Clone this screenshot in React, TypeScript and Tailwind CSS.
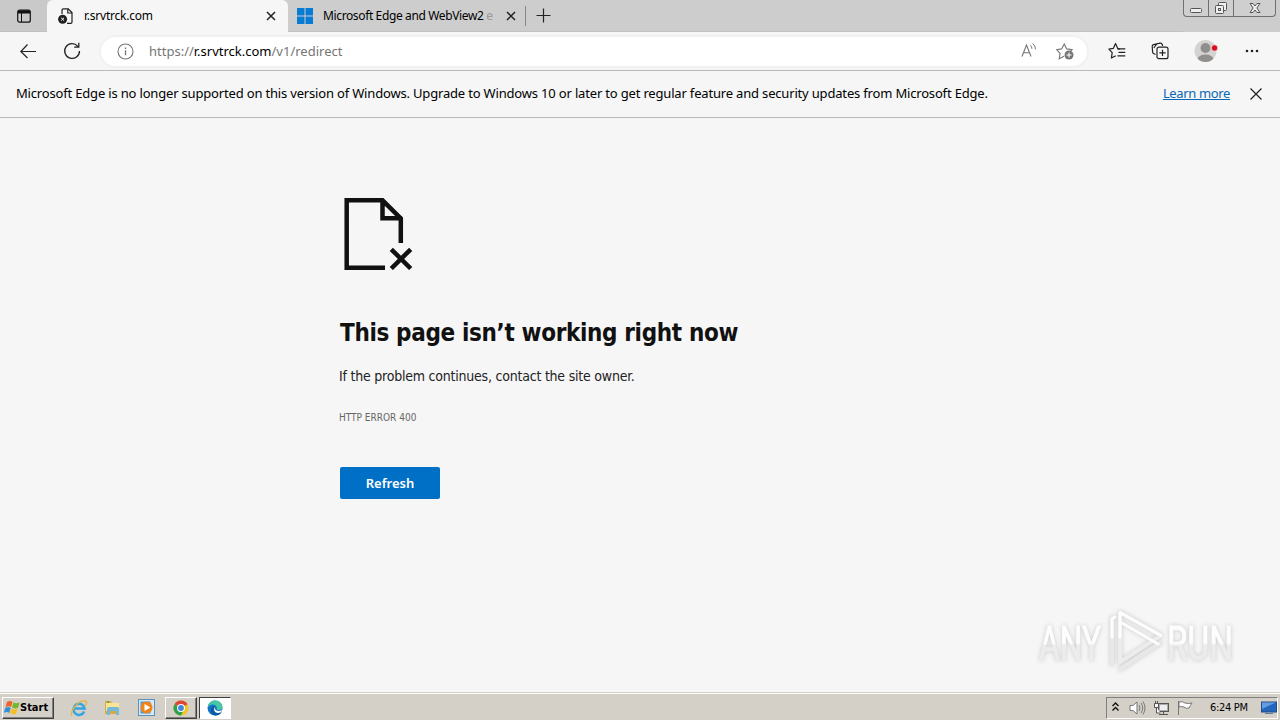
import type { ReactNode } from "react";

const UI = "font-['Noto_Sans','Open_Sans',sans-serif]";
const TAHOMA = "font-['DejaVu_Sans_Condensed','DejaVu_Sans',sans-serif]";

function Icon({ size = 20, className = "", children }: { size?: number; className?: string; children: ReactNode }) {
  return (
    <svg width={size} height={size} viewBox={`0 0 ${size} ${size}`} fill="none" stroke="currentColor" strokeWidth="1.2" className={`shrink-0 ${className}`}>
      {children}
    </svg>
  );
}

function TabClose() {
  return (
    <Icon size={10} className="text-[#222]">
      <path d="M1 1l8 8M9 1L1 9" strokeWidth="1.5" />
    </Icon>
  );
}

function TabBar() {
  return (
    <header className="flex h-8 shrink-0 bg-[#cdcdcd]">
      <div className="flex w-[47px] items-center border-b border-[#c0c0c0] bg-[#c9c9c9] pl-[17px]">
        <Icon size={14} className="text-[#111]">
          <rect x="0.7" y="1.2" width="12.6" height="12" rx="2" />
          <path d="M1 3h12" strokeWidth="3" />
          <path d="M4.5 4v9" strokeWidth="1" />
        </Icon>
      </div>
      <div className="flex w-[241px] items-center rounded-t-md bg-[#f6f6f6] pl-[11px]">
        <Icon size={16} className="-mr-px text-[#222]">
          <path d="M4 6V2Q4 .8 5.300 .8H10.200L14 4.600V14Q14 15.300 12.700 15.300H9M9.800 .8V5H14" />
          <circle cx="4.600" cy="11.200" r="4.500" fill="currentColor" stroke="none" />
          <path d="M3.200 9.800l2.800 2.800M6 9.800l-2.800 2.800" stroke="#fff" strokeWidth="1" />
        </Icon>
        <span className={`${UI} ml-[11px] w-[182px] whitespace-nowrap text-[12px] tracking-[-0.22px] text-black`}>r.srvtrck.com</span>
        <TabClose />
      </div>
      <div className="flex items-center border-b border-[#c2c2c2] pl-[9px]">
        <Icon size={16} className="text-[#087bd5]">
          <path d="M0 0h7.5v7.5H0zM8.5 0H16v7.5H8.5zM0 8.5h7.5V16H0zM8.5 8.5H16V16H8.5z" fill="currentColor" stroke="none" />
        </Icon>
        <span className={`${UI} ml-[10px] w-[173px] whitespace-nowrap text-[12px] tracking-[-0.37px] text-black`}>
          Microsoft Edge and WebView2 <span className="text-[#999]">e</span>
        </span>
        <span className="ml-[10px] flex"><TabClose /></span>
        <span className="ml-[9px] h-5 w-px bg-[#888]" />
        <Icon size={15} className="ml-[10px] text-[#222]">
          <path d="M7.5 .5v14M.5 7.5h14" />
        </Icon>
      </div>
      <div className="grow border-b border-[#c2c2c2]" />
      <div className="mr-1 flex h-[17px] w-[93px] rounded-b border border-t-0 border-[#707070] bg-[#cfcfcf]">
        <span className="flex w-[25px] justify-center border-r border-[#707070]">
          <Icon size={16} className="text-[#555]"><rect x="2.5" y="8.5" width="11" height="4" rx="1" fill="#eee" strokeWidth="1" /></Icon>
        </span>
        <span className="flex w-[25px] justify-center border-r border-[#707070]">
          <Icon size={16} className="text-[#555]">
            <rect x="5.5" y="2.5" width="8" height="8" rx="1" fill="#eee" strokeWidth="1" />
            <rect x="2.5" y="5.5" width="8" height="8" rx="1" fill="#eee" strokeWidth="1" />
            <rect x="5.5" y="8.5" width="2" height="2" strokeWidth="1" />
          </Icon>
        </span>
        <span className="flex grow justify-center">
          <Icon size={16} className="text-[#555]">
            <path d="M3 3.5h3l2 2.5 2-2.5h3L9.8 8l3.2 4.5h-3L8 10l-2 2.5H3L6.2 8z" fill="#eee" strokeWidth="1" />
          </Icon>
        </span>
      </div>
    </header>
  );
}

function Toolbar() {
  return (
    <div className="flex h-[39px] shrink-0 items-center border-b border-[#b9b9b9] bg-[#f6f6f6]">
      <Icon size={16} className="ml-5 text-[#222]"><path d="M16 8.5H1M7.5 1.5L.8 8.5l6.7 6.5" /></Icon>
      <Icon size={18} className="ml-[27px] text-[#222]">
        <path d="M14.8 4.3A7.4 7.4 0 1 0 16.5 9M15.8 .8V5.2h-4.6" strokeWidth="1.3" />
      </Icon>
      <div className="ml-[18px] flex h-[33px] w-[990px] items-center rounded-full border-2 border-[#f1f1f1] bg-white pl-4 text-[#767676]">
        <Icon size={17}>
          <circle cx="8.5" cy="8.5" r="7.5" strokeWidth="1.1" />
          <path d="M8.5 7.2v5M8.5 4.5v1.4" strokeWidth="1.3" />
        </Icon>
        <span className={`${UI} relative top-px ml-[15px] w-[871px] whitespace-nowrap text-[13px]`}>
          https://<span className="text-black">r.srvtrck.com</span>/v1/redirect
        </span>
        <Icon size={18}>
          <path d="M2 14.5L6.5 3l4.500 11.5M3.600 10.800h5.800" strokeWidth="1.1" />
          <path d="M10.400 3.200q1.600 1.400 1.500 3.600M12.600 1.400q3 2.300 2.900 6" strokeWidth="1" />
        </Icon>
        <Icon size={18} className="ml-[18px]">
          <path d="M8 14.200l-4.800 2.500 .9-5.300L.6 7.700l5-.8L8.200 2l2.500 4.900 5.400.8-1.500 1.500" strokeWidth="1.1" />
          <circle cx="13" cy="13" r="4.500" fill="currentColor" stroke="none" />
          <path d="M13 10.500v5M10.500 13h5" stroke="#fff" strokeWidth="1" />
        </Icon>
      </div>
      <Icon size={18} className="ml-[19px] text-[#222]">
        <path d="M12 6.800H9.900L7.500 1.600 5.300 6.400 .9 7.200 4.200 10.700 3.400 16 7.800 13.700" strokeLinejoin="round" />
        <path d="M9.500 6.800h7.800M10.500 10.300h6.800M9.500 13.800h7.800" />
      </Icon>
      <Icon size={18} className="ml-[25px] text-[#222]">
        <path d="M4.500 12.500L3 11.800Q1.700 11.300 1.600 10L1.200 4.500Q1.100 2.900 2.600 2.600L9 1.200q1.300-.3 2 .8l.8 2M5.600 2.200L2.800 6" />
        <rect x="6" y="5.2" width="11" height="11.500" rx="2" />
        <path d="M11.500 7.700V14M8.400 10.900h6.200" />
      </Icon>
      <svg width="24" height="24" viewBox="0 0 24 24" className="ml-[25px] shrink-0">
        <defs><clipPath id="avatar"><circle cx="11.5" cy="12" r="11" /></clipPath></defs>
        <g clipPath="url(#avatar)">
          <rect width="24" height="24" fill="#d5d3d1" />
          <circle cx="11.5" cy="9" r="5" fill="#918f8d" />
          <ellipse cx="11.5" cy="20" rx="8" ry="4.4" fill="#918f8d" />
        </g>
        <circle cx="20.5" cy="9" r="3.2" fill="#d90f20" stroke="#eee" strokeWidth=".7" />
      </svg>
      <Icon size={14} className="ml-[27px] text-[#222]">
        <g fill="currentColor" stroke="none"><circle cx="2" cy="7" r="1.3" /><circle cx="7" cy="7" r="1.3" /><circle cx="12" cy="7" r="1.3" /></g>
      </Icon>
    </div>
  );
}

function SupportNotice() {
  return (
    <div className={`${UI} flex h-[47px] shrink-0 items-center border-b border-[#b9b9b9] bg-[#f6f6f6] pl-4 pr-[18px] text-[13px] text-black`}>
      <span className="grow whitespace-nowrap tracking-[-0.176px]">
        Microsoft Edge is no longer supported on this version of Windows. Upgrade to Windows 10 or later to get regular feature and security updates from Microsoft Edge.
      </span>
      <a className="mr-5 whitespace-nowrap tracking-[-0.36px] text-[#0a68b4] underline">Learn more</a>
      <Icon size={12} className="text-[#222]"><path d="M.5 .5l11 11M11.5 .5l-11 11" /></Icon>
    </div>
  );
}

function Watermark() {
  return (
    <svg width="210" height="74" viewBox="0 0 210 74" className="absolute bottom-[13px] right-[36px] drop-shadow-[0_0_2px_#c8c8c8]">
      <defs>
        <linearGradient id="fade" gradientUnits="userSpaceOnUse" x1="0" y1="18" x2="0" y2="58">
          <stop offset="0.5" stopColor="#fdfdfd" />
          <stop offset="0.56" stopColor="#ececec" />
        </linearGradient>
      </defs>
      <g fill="url(#fade)" stroke="url(#fade)" strokeWidth="1" fontSize="48" className="font-['Roboto',sans-serif]">
        <text x="5" y="54.500" textLength="62" lengthAdjust="spacingAndGlyphs">ANY</text>
        <text x="133" y="54.500" textLength="66" lengthAdjust="spacingAndGlyphs">RUN</text>
      </g>
      <g fill="none" strokeLinejoin="round" strokeLinecap="round" strokeWidth="4">
        <path d="M86 7.500L127 30.500 86 57z" stroke="#ececec" />
        <path d="M78 13v46M86 64l40-26" stroke="#e8e8e8" />
        <path d="M86 32V7.500l41 23M78 32V14l3-2M88 18l36 21" stroke="#fdfdfd" strokeWidth="3" />
      </g>
    </svg>
  );
}

function ErrorPage() {
  return (
    <main className="relative flex grow flex-col items-start overflow-hidden bg-[#f6f6f6] pl-[340px] pt-[80px]">
      <svg width="72" height="72" viewBox="0 0 72 72" fill="none" stroke="#111" strokeWidth="4.500" className="ml-1">
        <path d="M41 69.800H2.700V2.300H38.500L56.800 20.500V45M38.500 2v18.200H58" />
        <path d="M47.300 51.300l19.400 19.200M66.700 51.300L47.300 70.500" />
      </svg>
      <h1 className={`${TAHOMA} mt-[47px] whitespace-nowrap text-[24px] font-bold leading-8 tracking-[-0.35px] text-[#111]`}>This page isn’t working right now</h1>
      <p className={`${TAHOMA} -ml-px mt-[17px] whitespace-nowrap text-[14px] leading-5 tracking-[-0.22px] text-[#222]`}>If the problem continues, contact the site owner.</p>
      <p className={`${TAHOMA} -ml-px mt-[24px] whitespace-nowrap text-[10px] leading-4 text-[#666]`}>HTTP ERROR 400</p>
      <button className={`${UI} mt-[41px] h-8 w-[100px] rounded-[2px] bg-[#0070c6] pt-px text-[13px] font-semibold text-white`}>Refresh</button>
      <Watermark />
    </main>
  );
}

function Taskbar() {
  return (
    <footer className="flex h-7 shrink-0 items-center border-t border-[#d4d0c8] bg-[#d4d0c8] pt-[2px] shadow-[inset_0_1px_0_#fff]">
      <button className="ml-[2px] flex h-[22px] w-[52px] items-center border border-b-[#404040] border-l-white border-r-[#404040] border-t-white pl-px shadow-[inset_-1px_-1px_0_#808080]">
        <svg width="16" height="16" viewBox="0 0 16 16" className="shrink-0">
          <path d="M3 2q3-2 5.5 0L7 7Q4.500 5.300 1.500 7z" fill="#ed632c" />
          <path d="M9.300 2.500Q12 4 15.500 2.500L14 8Q11 9 8 7.500z" fill="#75b72d" />
          <path d="M1.200 8q3-2 5.500 0l-1.500 5Q2.800 11-.2 13z" fill="#348ed8" />
          <path d="M7.600 8.500Q10 10 13.700 8.900L12 14Q9 15 6 13z" fill="#f7be24" />
        </svg>
        <span className={`${TAHOMA} pt-px text-[11px] font-bold text-black`}>Start</span>
      </button>
      <svg width="18" height="18" viewBox="0 0 18 18" className="ml-[16px]" fill="none">
        <path d="M14.200 12.500A5.600 5.600 0 1 1 14.600 9.500H4" stroke="#31a5e3" strokeWidth="2.500" />
        <path d="M2 16.500Q0 14 5 7.500T16 2q1.500 1.500-1 5" stroke="#e4b43c" strokeWidth="1.300" />
      </svg>
      <svg width="17" height="17" viewBox="0 0 17 17" className="ml-4">
        <path d="M1 2h6l1 2h7v11H1z" fill="#dba941" />
        <path d="M2 4h13v8H2z" fill="#fae593" />
        <path d="M3 10q0-2 2-2h8q2 0 2 2v6h-3v-4H6v4H3z" fill="#72bad8" />
        <path d="M3 2h2v2H3z" fill="#65a847" />
      </svg>
      <svg width="17" height="17" viewBox="0 0 17 17" className="ml-[17px]">
        <rect x=".5" y=".5" width="16" height="16" fill="#d7e8f6" stroke="#5b91ba" />
        <rect x="2.500" y="2.500" width="10" height="12" fill="#4e9ad0" />
        <circle cx="8.500" cy="8.500" r="6" fill="#f28319" />
        <path d="M6.500 5l6 3.500-6 3.500z" fill="#fff" />
      </svg>
      <div className="ml-[10px] flex h-[22px] w-8 items-center justify-center border border-b-[#404040] border-l-white border-r-[#404040] border-t-white shadow-[inset_-1px_-1px_0_#808080]">
        <svg width="16" height="16" viewBox="0 0 16 16">
          <circle cx="8" cy="8" r="7.500" fill="#f4c51c" />
          <path d="M8 8L1.500 4.250A7.500 7.500 0 0 1 14.500 4.250z" fill="#dc4638" />
          <path d="M8 8L1.500 4.250A7.500 7.500 0 0 0 8 15.500L11 9z" fill="#2ca24e" />
          <circle cx="8" cy="8" r="4" fill="#fff" /><circle cx="8" cy="8" r="2.900" fill="#4285df" />
        </svg>
      </div>
      <div className="ml-[2px] flex h-[22px] w-8 items-center justify-center border border-b-white border-l-[#404040] border-r-white border-t-[#404040] bg-white">
        <svg width="16" height="16" viewBox="0 0 16 16">
          <circle cx="8" cy="8" r="7.500" fill="#1474c4" />
          <path d="M1 6Q3 0 9 .5q6 1 6.500 6Q15.500 10 12 10q-3 0-2-2Q9 4 5 4.500 2 5 1 7z" fill="#46c8a5" />
          <path d="M7 7q-2 5 3 6 3 .6 5-1-3 4-7 3.500Q3 14 4 9q1-3 4-3z" fill="#0c58a2" />
          <path d="M8 7q-.5 3.500 3 4 2 .3 4-1l-1 2q-3 2-5.500.3Q6 10 8 7z" fill="#fff" />
        </svg>
      </div>
      <div className="grow" />
      <div className="mr-[2px] flex h-[22px] w-[172px] items-center border border-b-white border-l-[#808080] border-r-white border-t-[#808080] pl-[5px]">
        <svg width="7" height="10" viewBox="0 0 7 10" className="-mt-[2px] shrink-0" fill="none" stroke="#111" strokeWidth="1.400"><path d="M.5 4l3-3 3 3M.5 8.500l3-3 3 3" /></svg>
        <svg width="17" height="16" viewBox="0 0 17 16" className="ml-[10px] shrink-0" fill="none" stroke="#777">
          <path d="M1 5.500h3L8 2v12l-4-3.500H1z" fill="#fff" /><path d="M10 5q2 3 0 6M12 3q3.500 5 0 10M14 1.500q4 6.500 0 13" />
        </svg>
        <svg width="17" height="16" viewBox="0 0 17 16" className="ml-[7px] shrink-0" stroke="#555">
          <rect x="5.500" y="3.500" width="10" height="8" fill="#aaa" /><rect x="7" y="5" width="7" height="5" fill="#eee" stroke="none" />
          <path d="M10.500 12v2M6 14.500h9" />
          <path d="M1.500 3.500h4v4h-4zM2.500 1v2M4.500 1v2M3.500 7v6h4" fill="#f8f8f8" />
        </svg>
        <svg width="17" height="16" viewBox="0 0 17 16" className="ml-[7px] shrink-0" fill="#fff" stroke="#777"><path d="M1.500 1v14M2 2q4-1 6 1 3 1 7 0-2 3-3 5-3 1-5-1-2-1-5 0z" /></svg>
        <span className={`${TAHOMA} ml-[16px] w-[41px] whitespace-nowrap pt-px text-[11px] tracking-[-0.3px] text-black`}>6:24 PM</span>
        <svg width="16" height="14" viewBox="0 0 16 14" className="ml-[10px] shrink-0">
          <rect x=".5" y="1" width="15" height="10" fill="#2466be" stroke="#244b82" /><path d="M1 1.500h14L1 8z" fill="#639ce0" /><path d="M4 12h8v1H4z" fill="#637b9b" />
        </svg>
      </div>
    </footer>
  );
}

export default function App() {
  return (
    <div className="flex h-[720px] w-[1280px] flex-col overflow-hidden bg-[#f6f6f6]">
      <TabBar />
      <Toolbar />
      <SupportNotice />
      <ErrorPage />
      <Taskbar />
    </div>
  );
}
